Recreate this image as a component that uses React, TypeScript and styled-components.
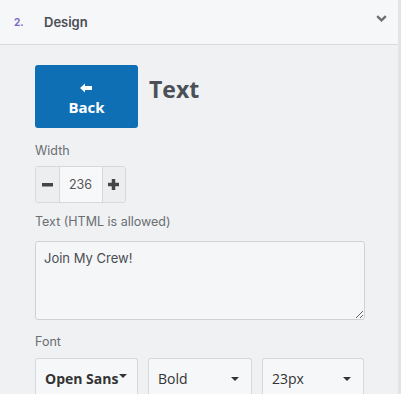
import React, { useState } from "react";
import styled, { createGlobalStyle } from "styled-components";

const GlobalStyle = createGlobalStyle`
  html, body {
    margin: 0;
    padding: 0;
    background: #eef0f2;
  }
  * {
    box-sizing: border-box;
  }
`;

const Panel = styled.div`
  width: 401px;
  height: 394px;
  overflow: hidden;
  background: #eff1f3;
  border-right: 3px solid #e2e4e7;
  font-family: Inter, Lato, sans-serif;
`;

const Header = styled.div`
  height: 45px;
  display: flex;
  align-items: center;
  padding: 0 10px 0 14px;
  background: #f6f7f9;
  border-bottom: 1px solid #d9dcdf;
`;

const StepNum = styled.span`
  width: 30px;
  font-size: 10px;
  font-weight: 700;
  color: #7b6bc7;
  font-family: Inter, sans-serif;
`;

const StepTitle = styled.span`
  flex: 1;
  font-size: 13px;
  font-weight: 600;
  color: #4a4d52;
  font-family: Inter, sans-serif;
`;

const Chevron = styled.svg`
  margin: 0 1px 7px 0;
`;

const Body = styled.div`
  padding: 20px 36px 0 35px;
  display: flex;
  flex-direction: column;
`;

const TitleRow = styled.div`
  display: flex;
  align-items: flex-start;
  gap: 11px;
  margin-bottom: 15px;
`;

const BackButton = styled.button`
  width: 103px;
  height: 63px;
  border: none;
  border-radius: 3px;
  background: #0f6fb5;
  color: #fff;
  display: flex;
  flex-direction: column;
  align-items: center;
  justify-content: center;
  gap: 4px;
  padding: 6px 0 0;
  font-family: "Open Sans", sans-serif;
  font-weight: 700;
  font-size: 15px;
  cursor: pointer;
`;

const Heading = styled.h2`
  margin: 8px 0 0;
  font-family: "Open Sans", sans-serif;
  font-weight: 700;
  font-size: 23px;
  color: #4b5057;
`;

const Label = styled.div<{ $gap: number }>`
  font-size: 12.5px;
  line-height: 16px;
  font-weight: 400;
  color: #6b6e72;
  margin-bottom: ${(p) => p.$gap}px;
`;

const Stepper = styled.div`
  display: flex;
  width: 91px;
  height: 37px;
  border: 1px solid #d6d9dc;
  border-radius: 3px;
  overflow: hidden;
  margin-bottom: 11px;
`;

const StepBtn = styled.div`
  width: 23px;
  display: flex;
  align-items: center;
  justify-content: center;
  background: #eceef0;
`;

const StepValue = styled.input`
  width: 44px;
  border: none;
  border-left: 1px solid #d6d9dc;
  border-right: 1px solid #d6d9dc;
  background: #f7f8fa;
  text-align: center;
  font-family: Inter, sans-serif;
  font-size: 12.5px;
  color: #555;
  outline: none;
`;

const TextArea = styled.textarea`
  width: 330px;
  height: 79px;
  border: 1px solid #cfd2d5;
  border-radius: 3px;
  background: #f5f6f8;
  padding: 8px 8px;
  font-family: Inter, sans-serif;
  font-size: 13px;
  color: #4a4d52;
  resize: vertical;
  outline: none;
  margin: 0 0 14px;
  display: block;
`;

const SelectRow = styled.div`
  display: flex;
  gap: 10px;
`;

const SelectBox = styled.div<{ $w: number; $bold?: boolean }>`
  width: ${(p) => p.$w}px;
  height: 40px;
  flex-shrink: 0;
  border: 1px solid #d6d9dc;
  border-bottom: none;
  border-radius: 3px 3px 0 0;
  background: #f6f7f9;
  display: flex;
  align-items: center;
  justify-content: ${(p) => (p.$bold ? "flex-start" : "space-between")};
  padding: 0 ${(p) => (p.$bold ? "4px" : "12px")} 0 9px;
  font-family: "Open Sans", sans-serif;
  font-size: 14px;
  font-weight: ${(p) => (p.$bold ? 700 : 400)};
  color: #333;
  white-space: nowrap;
`;

const Caret = styled.span<{ $up?: boolean }>`
  width: 0;
  height: 0;
  flex-shrink: 0;
  border-left: 4px solid transparent;
  border-right: 4px solid transparent;
  border-top: 4px solid #333;
  margin-left: ${(p) => (p.$up ? "1px" : "0")};
  margin-top: ${(p) => (p.$up ? "-6px" : "0")};
`;

const App = () => {
  const [width, setWidth] = useState(236);
  const [text, setText] = useState("Join My Crew!");

  return (
    <>
      <GlobalStyle />
      <Panel>
        <Header>
          <StepNum>2.</StepNum>
          <StepTitle>Design</StepTitle>
          <Chevron width="11" height="7" viewBox="0 0 11 7">
            <path d="M1.2 1.2 L5.5 5.3 L9.8 1.2" stroke="#6d6f73" strokeWidth="2.4" fill="none" />
          </Chevron>
        </Header>
        <Body>
          <TitleRow>
            <BackButton>
              <svg width="13" height="10" viewBox="0 0 13 10">
                <path d="M0 5 L5 0.5 L5 3 L12 3 L12 7 L5 7 L5 9.5 Z" fill="#fff" />
              </svg>
              Back
            </BackButton>
            <Heading>Text</Heading>
          </TitleRow>

          <Label $gap={7}>Width</Label>
          <Stepper>
            <StepBtn onClick={() => setWidth(width - 1)}>
              <svg width="11" height="4" viewBox="0 0 11 4">
                <rect width="11" height="3.5" fill="#454545" />
              </svg>
            </StepBtn>
            <StepValue value={width} onChange={(e) => setWidth(Number(e.target.value) || 0)} />
            <StepBtn onClick={() => setWidth(width + 1)}>
              <svg width="11" height="11" viewBox="0 0 11 11">
                <rect y="3.75" width="11" height="3.5" fill="#454545" />
                <rect x="3.75" width="3.5" height="11" fill="#454545" />
              </svg>
            </StepBtn>
          </Stepper>

          <Label $gap={11}>Text (HTML is allowed)</Label>
          <TextArea value={text} onChange={(e) => setText(e.target.value)} />

          <Label $gap={8}>Font</Label>
          <SelectRow>
            <SelectBox $w={103} $bold>
              Open Sans
              <Caret $up />
            </SelectBox>
            <SelectBox $w={104}>
              Bold
              <Caret />
            </SelectBox>
            <SelectBox $w={102}>
              23px
              <Caret />
            </SelectBox>
          </SelectRow>
        </Body>
      </Panel>
    </>
  );
};

export default App;
